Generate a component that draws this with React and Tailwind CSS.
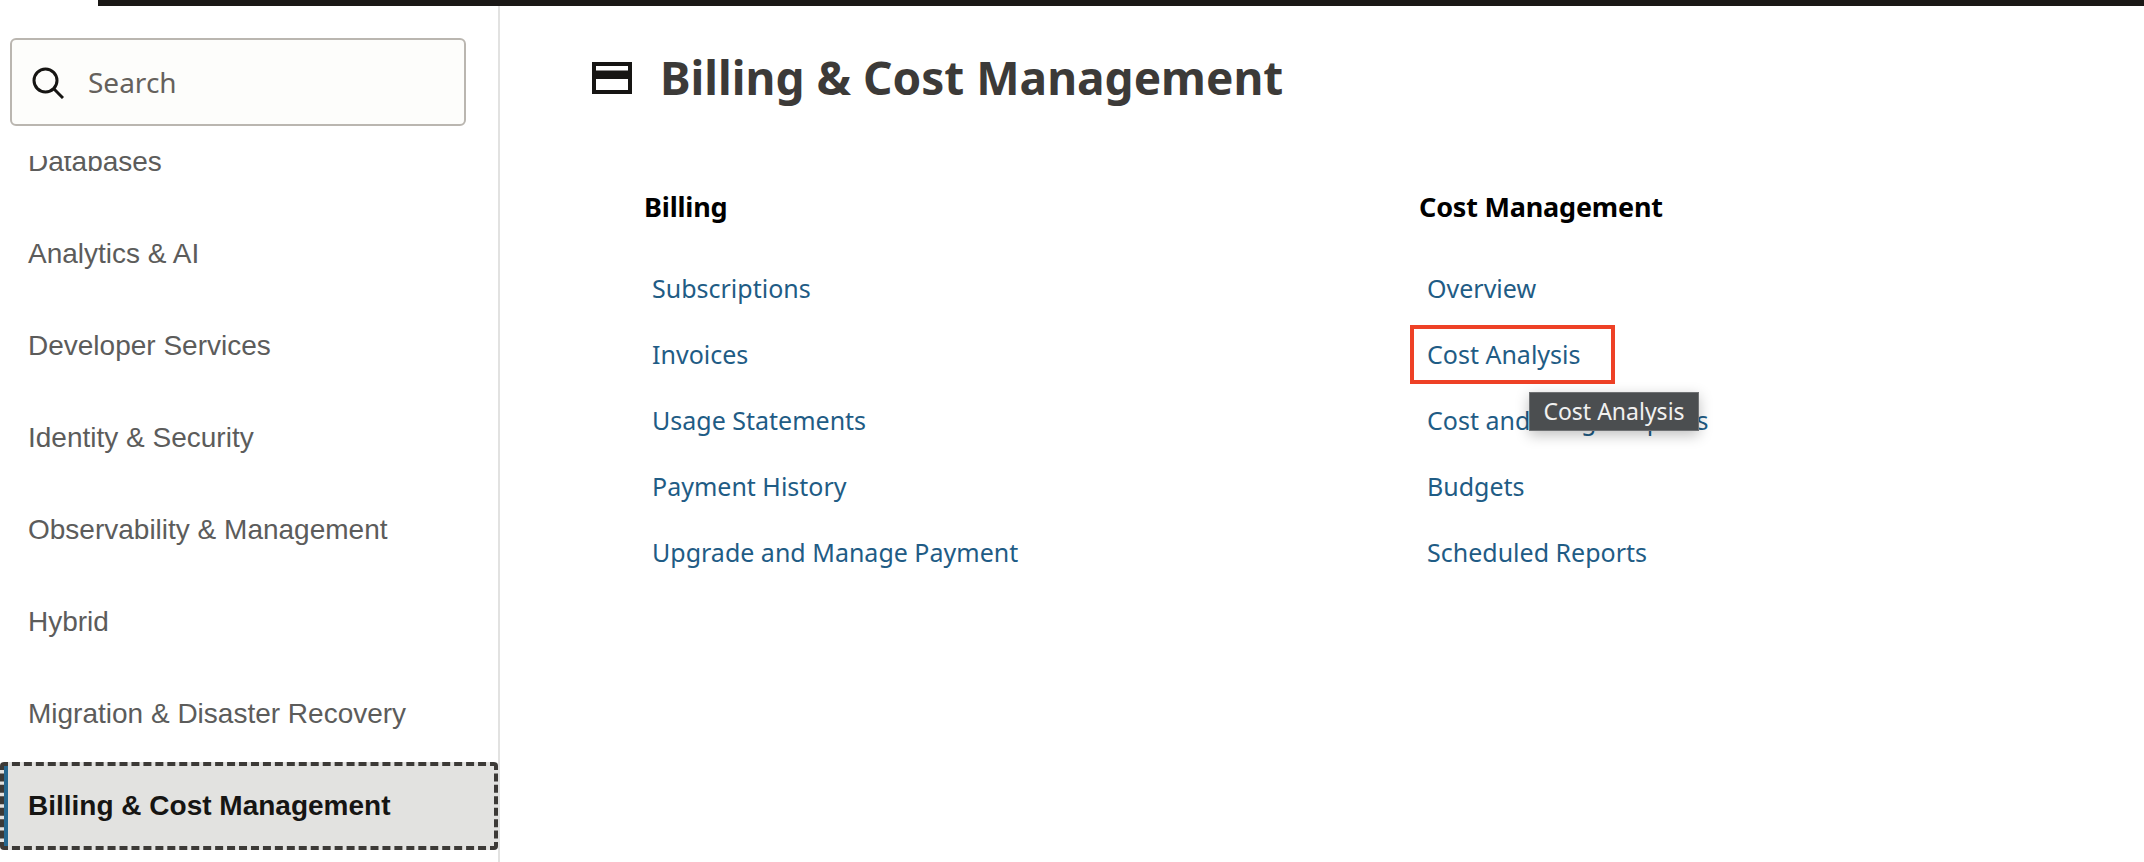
const sans = "font-['Liberation_Sans',Arial,sans-serif]"
const oracle = "font-['Noto_Sans',sans-serif]"

const navItems = ['Databases', 'Analytics & AI', 'Developer Services', 'Identity & Security', 'Observability & Management', 'Hybrid', 'Migration & Disaster Recovery']
const billing = ['Subscriptions', 'Invoices', 'Usage Statements', 'Payment History', 'Upgrade and Manage Payment']
const cost = ['Overview', 'Cost Analysis', 'Cost and Usage Reports', 'Budgets', 'Scheduled Reports']

function LinkColumn({ title, links, children }) {
  return (
    <div className="relative w-[775px] shrink-0">
      <h2 className={`${oracle} text-[27px] leading-[40px] font-bold tracking-[-0.2px] text-black`}>{title}</h2>
      <ul className="mt-[40px] pl-2">
        {links.map((l) => (
          <li key={l} className={`${oracle} h-[66px] text-[25px] leading-[42px] text-[#1f5c85]`}>{l}</li>
        ))}
      </ul>
      {children}
    </div>
  )
}

export default function App() {
  return (
    <div className="flex h-[862px] w-[2144px] flex-col overflow-hidden bg-white">
      <div className="ml-[98px] h-[6px] shrink-0 bg-[#1a1816]" />
      <div className="flex min-h-0 flex-1">
        <aside className="flex w-[500px] shrink-0 flex-col border-r-2 border-[#e2e2e1]">
          <div className="px-[10px] pt-[32px] pr-[32px]">
            <div className="flex h-[88px] items-center rounded-[6px] border-2 border-[#bab6b0] bg-[#fdfdfb] pl-[20px]">
              <svg width="32" height="32" viewBox="0 0 32 32" fill="none" stroke="#161513" strokeWidth="3" className="mt-[2px] shrink-0">
                <circle cx="13.500" cy="13.500" r="11.500" />
                <path d="M21.500 21.500L31 31" />
              </svg>
              <span className={`${oracle} ml-[24px] text-[28px] text-[#65615c]`}>Search</span>
            </div>
          </div>
          <div className="mt-[30px] min-h-0 flex-1 overflow-hidden">
            <ul className="-mt-[40px]">
              {navItems.map((n) => (
                <li key={n} className={`${sans} flex h-[92px] items-center pl-[28px] text-[28px] text-[#5c5c5b]`}>{n}</li>
              ))}
              <li className={`${sans} mt-[2px] flex h-[88px] items-center rounded-[4px] border-[4px] border-dashed border-[#3c3a37] bg-[#e2e2e0] pl-[24px] text-[28px] font-bold text-[#161513] shadow-[inset_4px_0_0_#25678f]`}>
                Billing &amp; Cost Management
              </li>
            </ul>
          </div>
        </aside>
        <main className="min-w-0 flex-1 pl-[92px] pt-[41px]">
          <div className="flex h-[60px] items-center">
            <svg width="40" height="32" viewBox="0 0 40 32" className="mt-[2px] shrink-0">
              <path d="M0 0H40V32H0Z M4 4V8.500H36V4Z M4 17V28H36V17Z" fill="#161513" fillRule="evenodd" />
            </svg>
            <h1 className={`${oracle} ml-[28px] text-[46px] font-bold leading-[60px] text-[#3c3a38]`}>Billing &amp; Cost Management</h1>
          </div>
          <div className="mt-[80px] flex pl-[52px]">
            <LinkColumn title="Billing" links={billing} />
            <LinkColumn title="Cost Management" links={cost}>
              <div className="absolute left-[-9px] top-[138px] h-[59px] w-[205px] border-[4px] border-[#ee4126]" />
              <div className={`${oracle} absolute left-[110px] top-[205px] flex h-[39px] w-[170px] items-center justify-center border border-[#6f7173] bg-[#4b4e50] text-[23px] text-[#f1f1f0] shadow-[0_4px_14px_rgba(0,0,0,0.25)]`}>
                Cost Analysis
              </div>
            </LinkColumn>
          </div>
        </main>
      </div>
    </div>
  )
}
